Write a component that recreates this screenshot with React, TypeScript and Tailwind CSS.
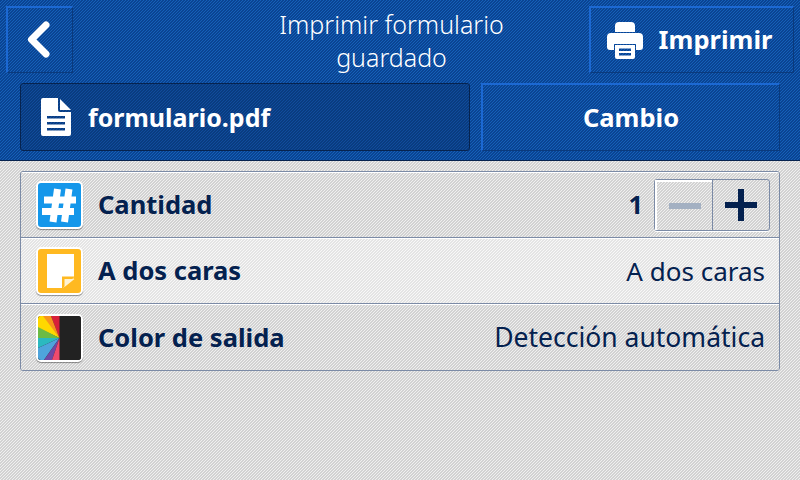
const font = "font-['Noto_Sans','Liberation_Sans',sans-serif]";

function PrinterIcon() {
  return (
    <svg width="38" height="38" viewBox="0 0 38 38" fill="white">
      <path d="M9 5a4 4 0 0 1 4-4h12a4 4 0 0 1 4 4v6H9z" />
      <path fillRule="evenodd" d="M5 12h28a4 4 0 0 1 4 4v10a3 3 0 0 1-3 3h-4v-6H8v6H4a3 3 0 0 1-3-3V16a4 4 0 0 1 4-4z" />
      <path fillRule="evenodd" d="M9 24h20v12a2 2 0 0 1-2 2H11a2 2 0 0 1-2-2zM13 27.500v2.500h12v-2.500zM13 32v2.500h12V32z" />
    </svg>
  );
}

function FileIcon() {
  return (
    <svg width="30" height="38" viewBox="0 0 30 38" fill="white">
      <path fillRule="evenodd" d="M2 0h15v12a2 2 0 0 0 2 2h11v22a2 2 0 0 1-2 2H2a2 2 0 0 1-2-2V2a2 2 0 0 1 2-2zM6 18v2.500h18V18zM6 24v2.500h18V24zM6 30v2.500h18V30z" />
      <path d="M19 1l11 11H19z" />
    </svg>
  );
}

function IconTile({ bg, children }: { bg: string; children: React.ReactNode }) {
  return (
    <div className={`w-[47px] h-[48px] rounded-[5px] border-2 border-white shadow-[0_1px_1px_rgba(0,0,0,0.4)] overflow-hidden flex items-center justify-center shrink-0 ${bg}`}>
      {children}
    </div>
  );
}

function HashIcon() {
  return (
    <svg width="43" height="44" viewBox="0 0 43 44" fill="none" stroke="white" strokeWidth="7">
      <path d="M19.500 6 15 39M31 6 26.500 39M6 17h32M4 28.500h32" />
    </svg>
  );
}

function PageIcon() {
  return (
    <svg width="43" height="44" viewBox="0 0 43 44">
      <path d="M9 5h27v24L25 39H9z" fill="white" />
      <path d="M24 40V27.500h13" fill="#ffb921" />
      <path d="M26.500 38v-8h10z" fill="#fff3d2" />
    </svg>
  );
}

function ColorIcon() {
  const c = "21.500,22";
  return (
    <svg width="43" height="44" viewBox="0 0 43 44">
      <rect width="43" height="44" fill="#222222" />
      <polygon points={`${c} 21.500,0 13,0`} fill="#d8203a" />
      <polygon points={`${c} 13,0 0,0`} fill="#f7941e" />
      <polygon points={`${c} 5,0 0,0 0,12`} fill="#ffd800" />
      <polygon points={`${c} 0,11 0,22`} fill="#6cbb45" />
      <polygon points={`${c} 0,22 0,32`} fill="#2bb9c0" />
      <polygon points={`${c} 0,32 0,44 6,44`} fill="#4ea4dc" />
      <polygon points={`${c} 6,44 14,44`} fill="#7048a5" />
      <polygon points={`${c} 14,44 21.500,44`} fill="#f04a6e" />
    </svg>
  );
}

function Row({ icon, label, children, light }: { icon: React.ReactNode; label: string; children: React.ReactNode; light?: boolean }) {
  return (
    <div
      className={`h-[66px] flex items-center pl-[15px] pr-[14px] border-t border-t-white ${
        light
          ? "bg-[repeating-linear-gradient(135deg,#f8f8f8_0,#f8f8f8_0.7px,#e4e4e4_0.7px,#e4e4e4_2.1213px)]"
          : "bg-[repeating-linear-gradient(135deg,#f0f0f0_0,#f0f0f0_0.7px,#d2d2d2_0.7px,#d2d2d2_2.1213px)]"
      }`}
    >
      {icon}
      <span className="ml-[15px] text-[25.500px] font-bold text-[#04214f] leading-none">{label}</span>
      <div className="ml-auto flex items-center">{children}</div>
    </div>
  );
}

export default function App() {
  const topBtn = "bg-[repeating-linear-gradient(135deg,#1660b8_0,#1660b8_0.7px,#0a4493_0.7px,#0a4493_2.1213px)] border border-[#0a3a7d] border-t-2 border-t-[#1c69d3] border-l-2 border-l-[#1c69d3] flex items-center justify-center text-white";
  return (
    <div className={`w-[800px] h-[480px] overflow-hidden flex flex-col bg-[repeating-linear-gradient(135deg,#f0f0f0_0,#f0f0f0_0.7px,#d2d2d2_0.7px,#d2d2d2_2.1213px)] ${font}`}>
      <header className="h-[161px] shrink-0 border-b border-b-[#06234f] bg-[repeating-linear-gradient(135deg,#1660b8_0,#1660b8_0.7px,#0a4493_0.7px,#0a4493_2.1213px)] pt-[6px]">
        <div className="flex h-[67px] pl-[6px] pr-[6px]">
          <button className={`${topBtn} w-[67px]`}>
            <svg width="30" height="44" viewBox="0 0 30 44" fill="none" stroke="white" strokeWidth="7" strokeLinecap="round" strokeLinejoin="round">
              <path d="M21 7 6.500 21.500 21 36" />
            </svg>
          </button>
          <div className="flex-1 pl-[121px] text-center text-white text-[25px] leading-[33px] font-light pt-[2px]">
            Imprimir formulario<br />guardado
          </div>
          <button className={`${topBtn} w-[205px] gap-[15px] pr-[6px]`}>
            <PrinterIcon />
            <span className="text-[25.500px] font-bold leading-none">Imprimir</span>
          </button>
        </div>
        <div className="flex h-[68px] mt-[10px] pl-[20px] pr-[20px] gap-[11px]">
          <div className="w-[450px] rounded-[3px] border border-[#06234f] bg-[repeating-linear-gradient(135deg,#114c9c_0,#114c9c_0.7px,#093c80_0.7px,#093c80_2.1213px)] flex items-center pl-[20px] gap-[17px] text-white">
            <FileIcon />
            <span className="text-[25px] font-bold leading-none">formulario.pdf</span>
          </div>
          <button className={`${topBtn} flex-1 text-[25.500px] font-bold`}>Cambio</button>
        </div>
      </header>
      <main className="px-[20px] pt-[10px]">
        <div className="rounded-[3px] border border-[#7c8ba6] divide-y divide-[#7c8ba6] overflow-hidden">
          <Row label="Cantidad" icon={<IconTile bg="bg-[#1597ea]"><HashIcon /></IconTile>}>
            <span className="text-[25.500px] font-bold text-[#04214f] mr-[11px] leading-none">1</span>
            <div className="flex h-[52px] w-[116px] -my-[4px] mr-[-5px] rounded-[3px] border border-[#7c8ba6] shadow-[0_1px_0_white]">
              <div className="w-[57px] flex items-center justify-center border-l-2 border-t-2 border-white">
                <div className="w-[32px] h-[6px] bg-[#a3b0c2]" />
              </div>
              <div className="flex-1 border-l border-[#7c8ba6] relative flex items-center justify-center">
                <div className="w-[32px] h-[6px] bg-[#04214f]" />
                <div className="absolute w-[6px] h-[32px] bg-[#04214f]" />
              </div>
            </div>
          </Row>
          <Row light label="A dos caras" icon={<IconTile bg="bg-[#ffb921]"><PageIcon /></IconTile>}>
            <span className="text-[26px] text-[#04214f] leading-none">A dos caras</span>
          </Row>
          <Row label="Color de salida" icon={<IconTile bg="bg-[#222222]"><ColorIcon /></IconTile>}>
            <span className="text-[26.500px] text-[#04214f] leading-none">Detección automática</span>
          </Row>
        </div>
      </main>
    </div>
  );
}
